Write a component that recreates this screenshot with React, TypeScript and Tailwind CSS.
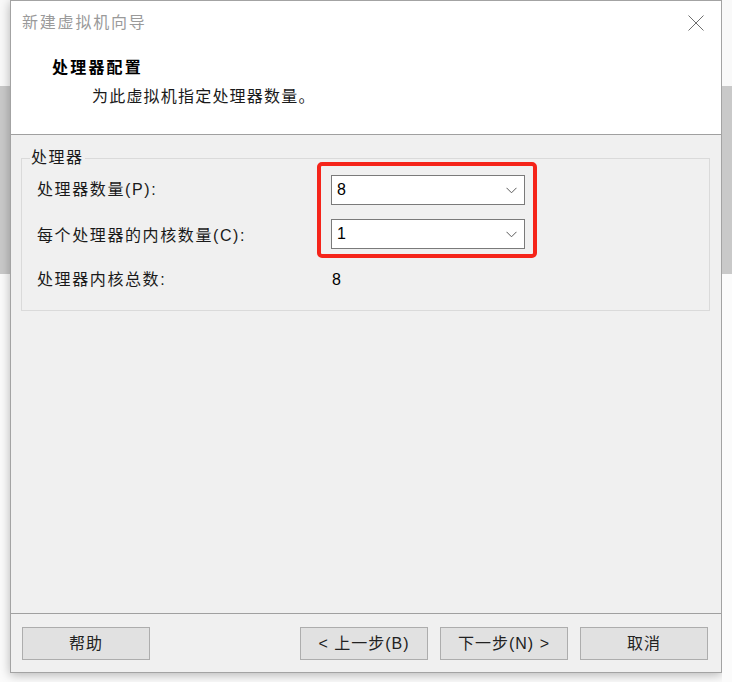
import { ReactNode } from "react";

const font = "font-['Liberation_Sans','Noto_Sans_CJK_SC',sans-serif]";

function Chevron() {
  return (
    <svg width="11" height="7" viewBox="0 0 11 7" className="text-[#5a5a5a]" aria-hidden="true">
      <polyline points="0.5,0.8 5.5,5.8 10.5,0.8" fill="none" stroke="currentColor" strokeWidth="1" />
    </svg>
  );
}

function Select({ value }: { value: string }) {
  return (
    <div className="flex h-[30px] w-[194px] items-center justify-between border border-[#7a7a7a] bg-white pl-[5px] pr-[7px]">
      <span className="text-[16px] text-black">{value}</span>
      <Chevron />
    </div>
  );
}

function Button({ children }: { children: ReactNode }) {
  return (
    <button className="flex h-[33px] w-[128px] items-center justify-center border border-[#adadad] bg-[#e1e1e1] text-[16px] tracking-[1px] text-[#222]">
      {children}
    </button>
  );
}

function Strip() {
  return (
    <div className="flex w-[10px] flex-col">
      <div className="h-[86px] bg-[#f9f9f9]" />
      <div className="h-[188px] bg-[#c9c9c9]" />
      <div className="flex-1 bg-[#fbfbfb]" />
    </div>
  );
}

export default function App() {
  return (
    <div className={`flex h-[682px] w-[732px] overflow-hidden bg-[#fbfbfb] ${font}`}>
      <Strip />
      <div className="flex h-[673px] w-[712px] flex-col border border-[#a3a3a3] bg-[#f0f0f0] shadow-[0_2px_10px_rgba(0,0,0,0.28)]">
        {/* title + header */}
        <div className="flex h-[133px] flex-col bg-white">
          <div className="flex h-[44px] items-center justify-between pl-[11px] pr-[17px]">
            <span className="text-[16px] tracking-[1.8px] text-[#9a9a9a]">新建虚拟机向导</span>
            <svg width="16" height="16" viewBox="0 0 16 16" className="text-[#6e6e6e]" aria-hidden="true">
              <path d="M0.5 0.5 L15.5 15.5 M15.5 0.5 L0.5 15.5" stroke="currentColor" strokeWidth="1" />
            </svg>
          </div>
          <div className="mt-[12px] pl-[41px] text-[16px] font-bold leading-[22px] tracking-[2.2px] text-black">处理器配置</div>
          <div className="mt-[7px] pl-[81px] text-[16px] leading-[22px] tracking-[1.2px] text-[#1a1a1a]">为此虚拟机指定处理器数量。</div>
        </div>
        <div className="h-px bg-[#a0a0a0]" />

        {/* body */}
        <div className="flex-1 pl-[10px] pr-[11px] pt-[23px]">
          <div className="relative border border-[#dadada] pb-[15px]">
            <span className="-mt-[11px] ml-[8px] block w-fit bg-[#f0f0f0] px-px text-[16px] leading-[20px] tracking-[1.5px] text-[#1a1a1a]">
              处理器
            </span>
            <div className="mt-[7px] grid grid-cols-[294px_1fr] items-center gap-y-[14px] pl-[15px] text-[16px] text-[#1a1a1a]">
              <span className="tracking-[1.6px]">处理器数量(P):</span>
              <Select value="8" />
              <span className="pt-[4px] tracking-[1.6px]">每个处理器的内核数量(C):</span>
              <Select value="1" />
              <span className="mt-[2px] flex h-[30px] items-center tracking-[1.6px]">处理器内核总数:</span>
              <span className="mt-[2px] flex h-[30px] items-center pl-[1px] text-black">8</span>
            </div>
            <div className="absolute left-[295px] top-[3px] h-[96px] w-[220px] rounded-[5px] border-[4px] border-[#f5241a]" />
          </div>
        </div>

        {/* footer */}
        <div className="h-px bg-[#a0a0a0]" />
        <div className="flex h-[58px] items-start pl-[11px] pt-[13px]">
          <Button>帮助</Button>
          <div className="ml-[150px] flex gap-[12px]">
            <Button>&lt; 上一步(B)</Button>
            <Button>下一步(N) &gt;</Button>
            <Button>取消</Button>
          </div>
        </div>
      </div>
      <Strip />
    </div>
  );
}
